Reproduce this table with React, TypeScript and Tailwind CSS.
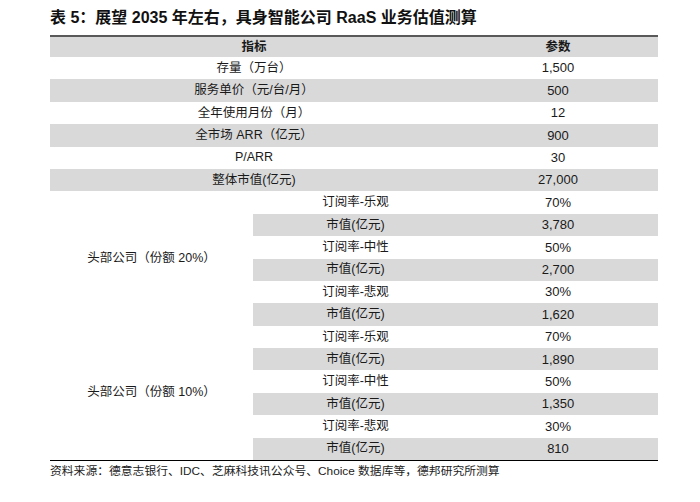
const FONT = "font-['Liberation_Sans','Noto_Sans_CJK_SC',sans-serif]";

const topRows: [string, string][] = [
  ['存量（万台）', '1,500'],
  ['服务单价（元/台/月）', '500'],
  ['全年使用月份（月）', '12'],
  ['全市场 ARR（亿元）', '900'],
  ['P/ARR', '30'],
  ['整体市值(亿元)', '27,000'],
];

const groups = [
  {
    label: '头部公司（份额 20%）',
    rows: [
      ['订阅率-乐观', '70%'],
      ['市值(亿元)', '3,780'],
      ['订阅率-中性', '50%'],
      ['市值(亿元)', '2,700'],
      ['订阅率-悲观', '30%'],
      ['市值(亿元)', '1,620'],
    ],
  },
  {
    label: '头部公司（份额 10%）',
    rows: [
      ['订阅率-乐观', '70%'],
      ['市值(亿元)', '1,890'],
      ['订阅率-中性', '50%'],
      ['市值(亿元)', '1,350'],
      ['订阅率-悲观', '30%'],
      ['市值(亿元)', '810'],
    ],
  },
];

export default function App() {
  return (
    <div className={`w-[700px] h-[502px] bg-white text-[#1a1a1a] ${FONT}`}>
      <div className="ml-[50px] w-[608px]">
        <h1 className="h-[35px] pt-[7px] text-[16px] leading-[21px] font-bold text-[#111]">
          表 5：展望 2035 年左右，具身智能公司 RaaS 业务估值测算
        </h1>
        <div className="border-t-2 border-[#595959] border-b-[1.5px] border-b-black grid grid-cols-[203px_205px_200px] grid-rows-[20px_repeat(18,22.4px)] text-[12.5px]">
          <div className="col-span-2 bg-[#d9d9d9] flex items-center justify-center font-bold">指标</div>
          <div className="bg-[#d9d9d9] flex items-center justify-center font-bold">参数</div>
          {topRows.map(([k, v], i) => {
            const bg = i % 2 === 1 ? 'bg-[#d9d9d9]' : 'bg-white';
            return [
              <div key={`k${i}`} className={`col-span-2 flex items-center justify-center ${bg}`}>{k}</div>,
              <div key={`v${i}`} className={`flex items-center justify-center text-[13px] ${bg}`}>{v}</div>,
            ];
          })}
          {groups.map((g, gi) => [
            <div key={`g${gi}`} className="row-span-6 col-start-1 flex items-center justify-center bg-white">
              {g.label}
            </div>,
            ...g.rows.map(([k, v], i) => {
              const bg = i % 2 === 1 ? 'bg-[#d9d9d9]' : 'bg-white';
              return [
                <div key={`gk${gi}${i}`} className={`col-start-2 flex items-center justify-center ${bg}`}>{k}</div>,
                <div key={`gv${gi}${i}`} className={`flex items-center justify-center text-[13px] ${bg}`}>{v}</div>,
              ];
            }),
          ])}
        </div>
        <p className="mt-[2px] text-[11.8px] leading-[16px] text-[#222]">
          资料来源：德意志银行、IDC、芝麻科技讯公众号、Choice 数据库等，德邦研究所测算
        </p>
      </div>
    </div>
  );
}
